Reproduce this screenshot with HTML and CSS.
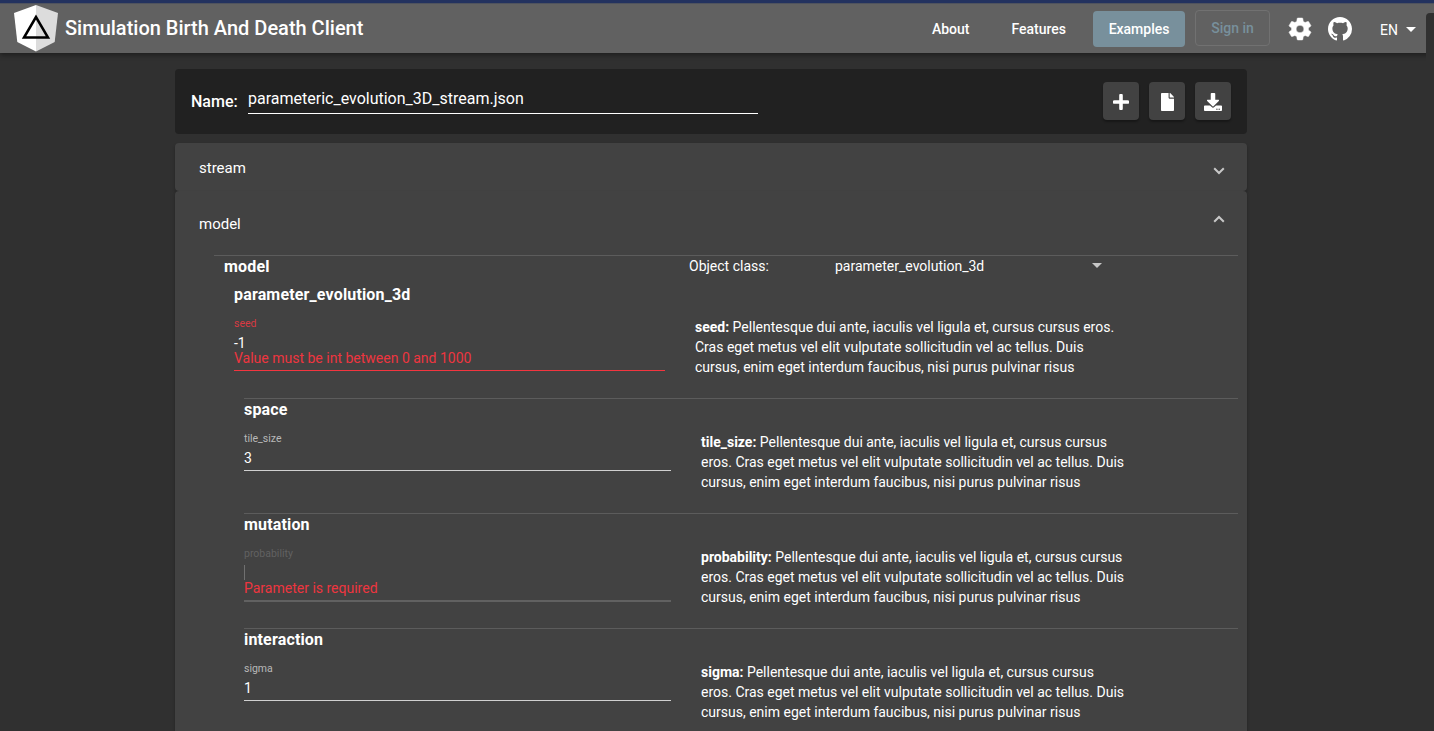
FILE: index.html
```html
<!DOCTYPE html>
<html lang="en">
<head>
<meta charset="utf-8">
<title>Simulation Birth And Death Client</title>
<link rel="stylesheet" href="styles.css">
</head>
<body>
<header class="toolbar">
  <svg class="logo" viewBox="0 0 44 47"><path fill="#fff" d="M22 0 0 8l3.300 29L22 46.500z"/><path fill="#dcdcdc" d="M22 0l22 8-3.300 29L22 46.500z"/><path fill="none" stroke="#000" stroke-width="2.500" d="M22 12 10 32.500h24z"/></svg>
  <h1 class="title">Simulation Birth And Death Client</h1>
  <nav class="nav">
    <a class="link about">About</a>
    <a class="link features">Features</a>
    <a class="link active">Examples</a>
    <button class="signin">Sign in</button>
    <svg class="gear" viewBox="1.300 1 21.400 22" preserveAspectRatio="none"><path fill="#fff" d="M12 15.500A3.500 3.500 0 0 1 8.500 12 3.500 3.500 0 0 1 12 8.500a3.500 3.500 0 0 1 3.500 3.500 3.500 3.500 0 0 1-3.500 3.500m7.430-2.530c.04-.32.07-.64.07-.97s-.03-.66-.07-1l2.110-1.630c.19-.15.24-.42.12-.64l-2-3.460c-.12-.22-.39-.31-.61-.22l-2.490 1c-.52-.39-1.060-.73-1.690-.98l-.37-2.650A.506.506 0 0 0 14 2h-4c-.25 0-.46.18-.5.42l-.37 2.650c-.63.25-1.170.59-1.690.98l-2.490-1c-.22-.09-.49 0-.61.22l-2 3.460c-.13.22-.07.49.12.64L4.570 11c-.04.34-.07.67-.07 1s.03.65.07.97l-2.110 1.660c-.19.15-.25.42-.12.64l2 3.460c.12.22.39.3.61.22l2.490-1.010c.52.4 1.060.74 1.690.99l.37 2.650c.04.24.25.42.5.42h4c.25 0 .46-.18.5-.42l.37-2.650c.63-.26 1.170-.59 1.690-.99l2.490 1.010c.22.08.49 0 .61-.22l2-3.460c.12-.22.07-.49-.12-.64z" stroke="#fff" stroke-width=".5" stroke-linejoin="round"/></svg>
    <svg class="github" viewBox="0 0 16 16"><path fill="#fff" d="M8 0C3.580 0 0 3.580 0 8c0 3.540 2.290 6.530 5.470 7.590.4.070.55-.17.55-.38 0-.19-.01-.82-.01-1.490-2.010.37-2.530-.49-2.690-.94-.09-.23-.48-.94-.82-1.130-.28-.15-.68-.52-.01-.53.63-.01 1.080.58 1.230.82.72 1.210 1.870.87 2.330.66.07-.52.28-.87.51-1.070-1.780-.2-3.640-.89-3.640-3.950 0-.87.31-1.590.82-2.150-.08-.2-.36-1.020.08-2.120 0 0 .67-.21 2.200.82.64-.18 1.320-.27 2-.27s1.360.09 2 .27c1.530-1.040 2.200-.82 2.200-.82.44 1.100.16 1.920.08 2.120.51.56.82 1.270.82 2.150 0 3.070-1.870 3.750-3.650 3.950.29.25.54.73.54 1.480 0 1.070-.01 1.930-.01 2.200 0 .21.15.46.55.38A8.010 8.010 0 0 0 16 8c0-4.420-3.580-8-8-8z"/></svg>
    <span class="lang">EN</span><i class="caret"></i>
  </nav>
</header>
<div class="thumb"></div>
<main class="page">
  <section class="namebar">
    <label class="name-label">Name:</label>
    <div class="name-input">parameteric_evolution_3D_stream.json</div>
    <div class="actions">
      <button class="action"><svg width="16" height="16" viewBox="0 0 16 16"><path d="M8 1.500v13M1.500 8h13" stroke="#fff" stroke-width="3.600" stroke-linecap="round"/></svg></button>
      <button class="action"><svg class="file" width="13" height="18" viewBox="0 0 384 512" preserveAspectRatio="none"><path fill="#fff" d="M224 136V0H24C10.700 0 0 10.700 0 24v464c0 13.300 10.700 24 24 24h336c13.300 0 24-10.700 24-24V160H248c-13.200 0-24-10.800-24-24zm160-14.100v6.100H256V0h6.100c6.400 0 12.500 2.500 17 7l97.900 98c4.500 4.500 7 10.600 7 16.900z"/></svg></button>
      <button class="action"><svg width="18" height="18" viewBox="0 0 512 512"><path fill="#fff" d="M216 0h80c13.300 0 24 10.700 24 24v168h87.700c17.800 0 26.700 21.500 14.100 34.100L269.700 378.300c-7.500 7.500-19.800 7.500-27.300 0L90.100 226.100c-12.600-12.600-3.700-34.100 14.100-34.100H192V24c0-13.300 10.700-24 24-24zm296 376v112c0 13.300-10.700 24-24 24H24c-13.300 0-24-10.700-24-24V376c0-13.300 10.700-24 24-24h146.700l49 49c20.100 20.100 52.500 20.100 72.600 0l49-49H488c13.300 0 24 10.700 24 24zm-124 88c0-11-9-20-20-20s-20 9-20 20 9 20 20 20 20-9 20-20zm64 0c0-11-9-20-20-20s-20 9-20 20 9 20 20 20 20-9 20-20z"/></svg></button>
    </div>
  </section>
  <section class="panel closed"><span>stream</span><svg class="chevron" viewBox="0 0 12 8"><path d="m1.200 1.200 4.800 4.800 4.800-4.800"/></svg></section>
  <section class="panel open">
    <div class="panel-head"><span>model</span><svg class="chevron" viewBox="0 0 12 8"><path d="m1.200 6.800 4.800-4.800 4.800 4.800"/></svg></div>
    <div class="model">
      <div class="model-row"><h2 class="heading">model</h2><span class="class-label">Object class:</span><span class="class-value">parameter_evolution_3d</span><i class="caret select-caret"></i></div>
      <div class="root">
        <h2 class="heading">parameter_evolution_3d</h2>
        <div class="row">
          <div class="field invalid"><div class="label">seed</div><div class="value">-1</div><div class="error">Value must be int between 0 and 1000</div></div>
          <p class="help"><b>seed:</b> Pellentesque dui ante, iaculis vel ligula et, cursus cursus eros.<br>Cras eget metus vel elit vulputate sollicitudin vel ac tellus. Duis<br>cursus, enim eget interdum faucibus, nisi purus pulvinar risus</p>
        </div>
        <div class="group">
          <h2 class="heading">space</h2>
          <div class="row">
            <div class="field"><div class="label">tile_size</div><div class="value">3</div></div>
            <p class="help"><b>tile_size:</b> Pellentesque dui ante, iaculis vel ligula et, cursus cursus<br>eros. Cras eget metus vel elit vulputate sollicitudin vel ac tellus. Duis<br>cursus, enim eget interdum faucibus, nisi purus pulvinar risus</p>
          </div>
        </div>
        <div class="group">
          <h2 class="heading">mutation</h2>
          <div class="row">
            <div class="field focused"><div class="label">probability</div><div class="value"><i class="cursor"></i></div><div class="error">Parameter is required</div></div>
            <p class="help"><b>probability:</b> Pellentesque dui ante, iaculis vel ligula et, cursus cursus<br>eros. Cras eget metus vel elit vulputate sollicitudin vel ac tellus. Duis<br>cursus, enim eget interdum faucibus, nisi purus pulvinar risus</p>
          </div>
        </div>
        <div class="group">
          <h2 class="heading">interaction</h2>
          <div class="row">
            <div class="field"><div class="label">sigma</div><div class="value">1</div></div>
            <p class="help"><b>sigma:</b> Pellentesque dui ante, iaculis vel ligula et, cursus cursus<br>eros. Cras eget metus vel elit vulputate sollicitudin vel ac tellus. Duis<br>cursus, enim eget interdum faucibus, nisi purus pulvinar risus</p>
          </div>
        </div>
      </div>
    </div>
  </section>
</main>
</body>
</html>
```
FILE: styles.css
```css
* { box-sizing: border-box; }
html, body { height: 100%; }
body { margin: 0; overflow: hidden; background: #303030; color: #fff; font: 14px/20px Roboto, sans-serif; }
h1, h2, p { margin: 0; }
button { font: inherit; padding: 0; }
svg { display: block; flex: none; }

.toolbar { position: relative; display: flex; align-items: flex-start; height: 53px; padding-left: 14px; background: #616161; border-top: 3px solid #23325f; box-shadow: inset 0 1px #4f535e, 0 2px 5px rgba(0,0,0,.4); }
.logo { width: 44px; height: 47px; margin-top: 2px; }
.title { margin: 11px 0 0 7px; font-size: 20px; line-height: 28px; font-weight: 500; white-space: nowrap; }
.nav { display: flex; flex: 1; justify-content: flex-end; padding-right: 18px; font-weight: 500; }
.link { height: 36px; margin-top: 8px; line-height: 36px; }
.features { margin-left: 42px; }
.active { width: 92px; margin-left: 27px; border-radius: 4px; background: #78909c; text-align: center; }
.signin { width: 75px; height: 36px; margin: 7px 0 0 10px; border: 1px solid #717171; border-radius: 4px; background: none; color: #78909c; line-height: 34px; }
.gear { width: 24px; height: 24px; margin: 14px 0 0 18px; }
.github { width: 24px; height: 24px; margin: 14px 0 0 16px; }
.lang { margin: 17px 0 0 28px; font-weight: 400; }
.caret { width: 0; height: 0; border: 5px solid transparent; border-top-color: #fff; border-bottom: 0; }
.nav .caret { margin: 24px 0 0 8px; }
.thumb { position: absolute; top: 13px; right: 0; width: 8px; height: 718px; border-radius: 4px 0 0; background: #303030; }

.page { width: 1072px; margin: 16px 0 0 175px; }
.namebar { display: flex; height: 65px; padding: 13px 16px 0; border-radius: 4px; background: #212121; font-size: 16px; }
.name-label { margin-top: 10px; font-weight: 500; width: 57px; }
.name-input { width: 510px; height: 32px; padding-top: 7px; border-bottom: 1px solid #fff; }
.actions { display: flex; gap: 10px; margin-left: auto; }
.action { display: flex; align-items: center; justify-content: center; width: 36px; height: 38px; padding-top: 2px; border: 0; border-radius: 4px; background: #424242; box-shadow: 0 2px 2px rgba(0,0,0,.3); }
.file { margin-left: 1px; }

.panel { background: #424242; font-size: 15px; box-shadow: 0 2px 3px rgba(0,0,0,.25); }
.closed { display: flex; justify-content: space-between; height: 48px; margin-top: 9px; padding: 15px 22px 0 24px; border-radius: 4px; }
.closed .chevron { margin-top: 9px; }
.open { height: 560px; border-radius: 4px 4px 0 0; }
.panel-head { display: flex; justify-content: space-between; height: 64px; padding: 23px 22px 0 24px; }
.panel-head .chevron { margin-top: 1px; }
.chevron { width: 12px; height: 8px; fill: none; stroke: #c7c7c7; stroke-width: 2; }

.model { margin: 0 9px 0 39px; border-top: 1px solid #5c5c5c; }
.model-row { display: flex; height: 28px; padding-left: 10px; font-size: 14px; line-height: 20px; }
.heading { font-size: 16px; font-weight: 700; line-height: 22px; letter-spacing: .16px; }
.model-row .heading { width: 465px; }
.class-label { width: 146px; }
.class-value { width: 257px; }
.select-caret { margin-top: 7px; border-top-color: #c7c7c7; }
.root { padding-left: 20px; }
.row { display: flex; align-items: flex-start; height: 92px; }
.field { width: 431px; border-bottom: 1px solid #d0d0d0; }
.label { font-size: 10.500px; line-height: 14px; color: #b8b8b8; }
.value { height: 15px; margin-top: 2px; font-size: 14px; line-height: 20px; }
.error { margin-top: 2px; color: #ee353f; font-size: 14px; line-height: 16px; }
.invalid { height: 54px; margin-top: 11px; border-bottom: 1px solid #f3353f; }
.invalid .label { color: #d83a43; }
.help { margin: 11px 0 0 30px; color: #fff; font-size: 14px; white-space: nowrap; }
.group { height: 115px; margin-left: 10px; border-top: 1px solid #5c5c5c; }
.group .field { width: 427px; height: 39px; margin-top: 11px; }
.group .focused { height: 55px; border-bottom: 2px solid #616161; }
.focused .label { color: #616161; }
.focused .value { padding-top: 2px; }
.cursor { display: block; width: 1px; height: 15px; background: #707070; }
```
